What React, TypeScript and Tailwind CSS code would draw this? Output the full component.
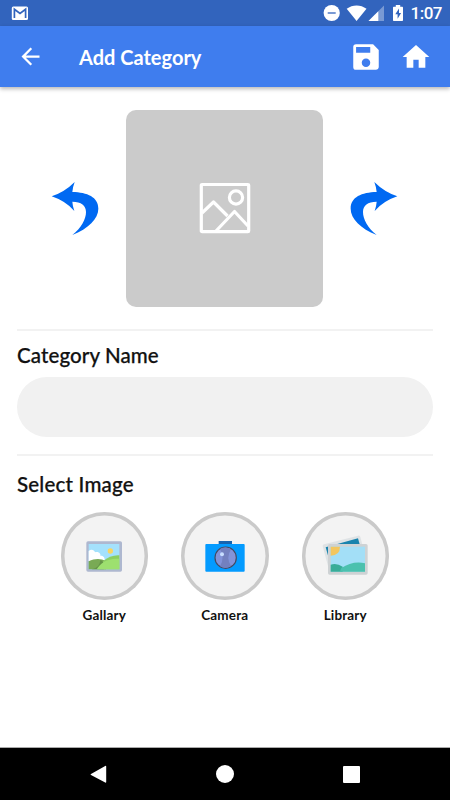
import React from 'react';
import { MdArrowBack, MdHome, MdSave } from 'react-icons/md';

const StatusBar: React.FC = () => (
  <div className="flex h-[26px] shrink-0 items-center justify-between bg-[#3264bd] pl-[11px] pr-[8px] text-white">
    <svg className="h-[15px] w-[18px]" viewBox="0 0 18 15">
      <rect x="0.8" y="0.5" width="16.2" height="13.5" rx="1.5" fill="#fff" />
      <path d="M3.4 12V3.2L9 7.4l5.6-4.2V12" fill="none" stroke="#3264bd" strokeWidth="1.7" />
    </svg>
    <div className="flex items-center">
      <svg className="h-[18px] w-[80px]" viewBox="0 0 80 18">
        {/* do not disturb */}
        <circle cx="8.7" cy="9" r="8.1" fill="#fff" />
        <path d="M4.7 9h8" stroke="#3264bd" strokeWidth="1.3" />
        {/* wifi */}
        <path d="M23.7 4.8C29.5.3 37.7.3 43.5 4.8L33.6 17z" fill="#fff" />
        {/* signal */}
        <path d="M61 1.5V17H45.5z" fill="#fff" opacity=".35" />
        <path d="M55.3 7.2V17h-9.8z" fill="#fff" />
        {/* battery */}
        <path d="M72.8 1h4.4v1.7H79c.6 0 1 .4 1 1V16c0 .6-.4 1-1 1h-8c-.6 0-1-.4-1-1V3.7c0-.6.4-1 1-1h1.8z" fill="#fff" />
        <path d="M76 4.5l-3.7 5.8h2.3V14.8l3.5-5.9h-2.1z" fill="#3264bd" />
      </svg>
      <span className="ml-[8px] font-['Roboto',sans-serif] text-[17px] font-medium leading-[26px] tracking-[-0.5px]">1:07</span>
    </div>
  </div>
);

const TurnArrow: React.FC<{ className?: string }> = ({ className }) => (
  <svg className={`h-[57px] w-[50px] shrink-0 ${className ?? ''}`} viewBox="30 30 150 171">
    <path
      d="M35 79Q74 66 104 36Q98 52 97 66C142 67 175 81 175 116C175 146 145 176 97 195C124 174 138 147 138 126C138 106 124 95 97 95Q98 109 103 123Q77 93 35 79Z"
      fill="#0069f2"
    />
  </svg>
);

const GalleryIcon: React.FC = () => (
  <svg className="h-[32px] w-[38px]" viewBox="0 0 114 96">
    <rect x="4" y="4" width="107" height="91" rx="5" fill="#aeb8d0" />
    <rect x="11" y="12" width="92" height="76" fill="#a4e1fc" />
    <path d="M11 33c7-6 17-4 19 4 12-4 18 6 16 10 10-1 14 6 13 16H11z" fill="#fff" />
    <circle cx="76" cy="33" r="8" fill="#f8d563" />
    <path d="M11 64c18-8 35-10 52 0v24H11z" fill="#79aa55" />
    <path d="M46 60c9 3 11 12 10 28H20c18-3 25-15 26-28z" fill="#659548" />
    <path d="M54 64c14-13 31-19 49-18v42H54z" fill="#8cce62" />
    <path d="M35 88c18-28 40-32 68-32v32z" fill="#9de06f" />
  </svg>
);

const CameraIcon: React.FC = () => (
  <svg className="h-[32px] w-[40px]" viewBox="0 0 120 96">
    <rect x="41" y="3" width="40" height="12" fill="#1764af" />
    <rect x="1" y="12" width="118" height="83" rx="3" fill="#039bff" />
    <circle cx="62" cy="53" r="32" fill="#8393d8" stroke="#444961" strokeWidth="3.5" />
    <path d="M45 27Q62 18 78 28Q62 53 78 78Q61 89 45 79Q61 52 45 27z" fill="#7380bf" />
    <circle cx="51" cy="43" r="6" fill="#c8ddff" />
  </svg>
);

const LibraryIcon: React.FC = () => (
  <svg className="h-[41px] w-[47px]" viewBox="0 0 141 123">
    <path d="M2 34Q1 29 6 28L108 2Q113 1 115 6L134 78L22 107Z" fill="#dfe3e5" />
    <path d="M11 37L108 10L126 76L29 100Z" fill="#1883ad" />
    <rect x="18" y="27" width="119" height="92" rx="5" fill="#ced2d4" />
    <rect x="26" y="35" width="103" height="75" fill="#a3dff7" />
    <path d="M26 35h28q0 26-28 27z" fill="#f3c65e" />
    <path d="M26 89q18-6 36 6v15H26z" fill="#38ad98" />
    <path d="M58 99c22-14 46-20 71-14v25H54q2-7 4-11z" fill="#4bc1ae" />
  </svg>
);

interface SourceButtonProps {
  label: string;
  children: React.ReactNode;
}

const SourceButton: React.FC<SourceButtonProps> = ({ label, children }) => (
  <button className="flex w-[87.5px] flex-col items-center">
    <span className="flex h-[87.5px] w-[87.5px] items-center justify-center rounded-full bg-[#f3f3f3] shadow-[inset_0_0_0_3.5px_#cacaca]">
      {children}
    </span>
    <span className="mt-[5px] text-[13.5px] font-bold leading-5 tracking-[0.15px] text-[#111]">{label}</span>
  </button>
);

const App: React.FC = () => {
  return (
    <div className="flex h-[800px] w-[450px] flex-col overflow-hidden bg-white font-['Lato',sans-serif] text-[#111]">
      <StatusBar />

      <header className="z-10 flex h-[61px] shrink-0 items-center bg-[#3f7dee] pl-[17px] pr-[18px] text-white shadow-[0_2px_4px_rgba(0,0,0,0.28)]">
        <MdArrowBack className="h-[27px] w-[27px]" />
        <h1 className="ml-[35px] flex-1 whitespace-nowrap text-[20px] font-bold leading-none">Add Category</h1>
        <MdSave className="h-[34px] w-[34px]" />
        <MdHome className="ml-[17px] h-[32px] w-[32px]" />
      </header>

      <main className="flex min-h-0 flex-1 flex-col">
        <div className="mt-[22.5px] flex h-[197px] items-center gap-[26px] pl-[50px]">
          <TurnArrow />
          <div className="flex h-[197px] w-[197px] items-center justify-center rounded-[10px] bg-[#cbcbcb]">
            <svg className="h-[52px] w-[52px]" viewBox="0 0 52 52" fill="none" stroke="#fff" strokeWidth="3.2" strokeLinejoin="round">
              <rect x="2.3" y="2.5" width="47.4" height="47.2" rx="0.8" />
              <circle cx="37" cy="15.5" r="6.6" />
              <path d="M3 31L14.5 20L28.5 34M17 49L35.5 29.5L49 44" />
            </svg>
          </div>
          <TurnArrow className="-scale-x-100" />
        </div>

        <section className="mx-[17px] mt-[22.5px] border-t-2 border-[#f2f2f2]">
          <h2 className="mt-[12px] text-[20.5px] font-medium leading-6 tracking-[0.1px] [-webkit-text-stroke:0.25px]">Category Name</h2>
          <input className="mt-[10px] block h-[60px] w-full rounded-full bg-[#f1f1f1] px-6 outline-none" />
        </section>

        <section className="mx-[17px] mt-[17px] border-t-2 border-[#f2f2f2]">
          <h2 className="mt-[16px] text-[20.5px] font-medium leading-6 tracking-[0.2px] [-webkit-text-stroke:0.25px]">Select Image</h2>
          <div className="ml-[43.5px] mt-[16px] flex gap-[33px]">
            <SourceButton label="Gallary"><GalleryIcon /></SourceButton>
            <SourceButton label="Camera"><CameraIcon /></SourceButton>
            <SourceButton label="Library"><LibraryIcon /></SourceButton>
          </div>
        </section>
      </main>

      <nav className="flex h-[53px] shrink-0 items-center justify-between border-t border-[#aaa] bg-black px-[90px]">
        <svg className="h-[19px] w-[17px]" viewBox="0 0 17 19">
          <path d="M1 9L15.2 1Q16.2 .5 16.2 1.5V17Q16.2 18 15.2 17.5L1 10Q0 9.5 1 9Z" fill="#fff" />
        </svg>
        <div className="h-[18px] w-[18px] rounded-full bg-white" />
        <div className="h-[17px] w-[17px] rounded-[1px] bg-white" />
      </nav>
    </div>
  );
};

export default App;
